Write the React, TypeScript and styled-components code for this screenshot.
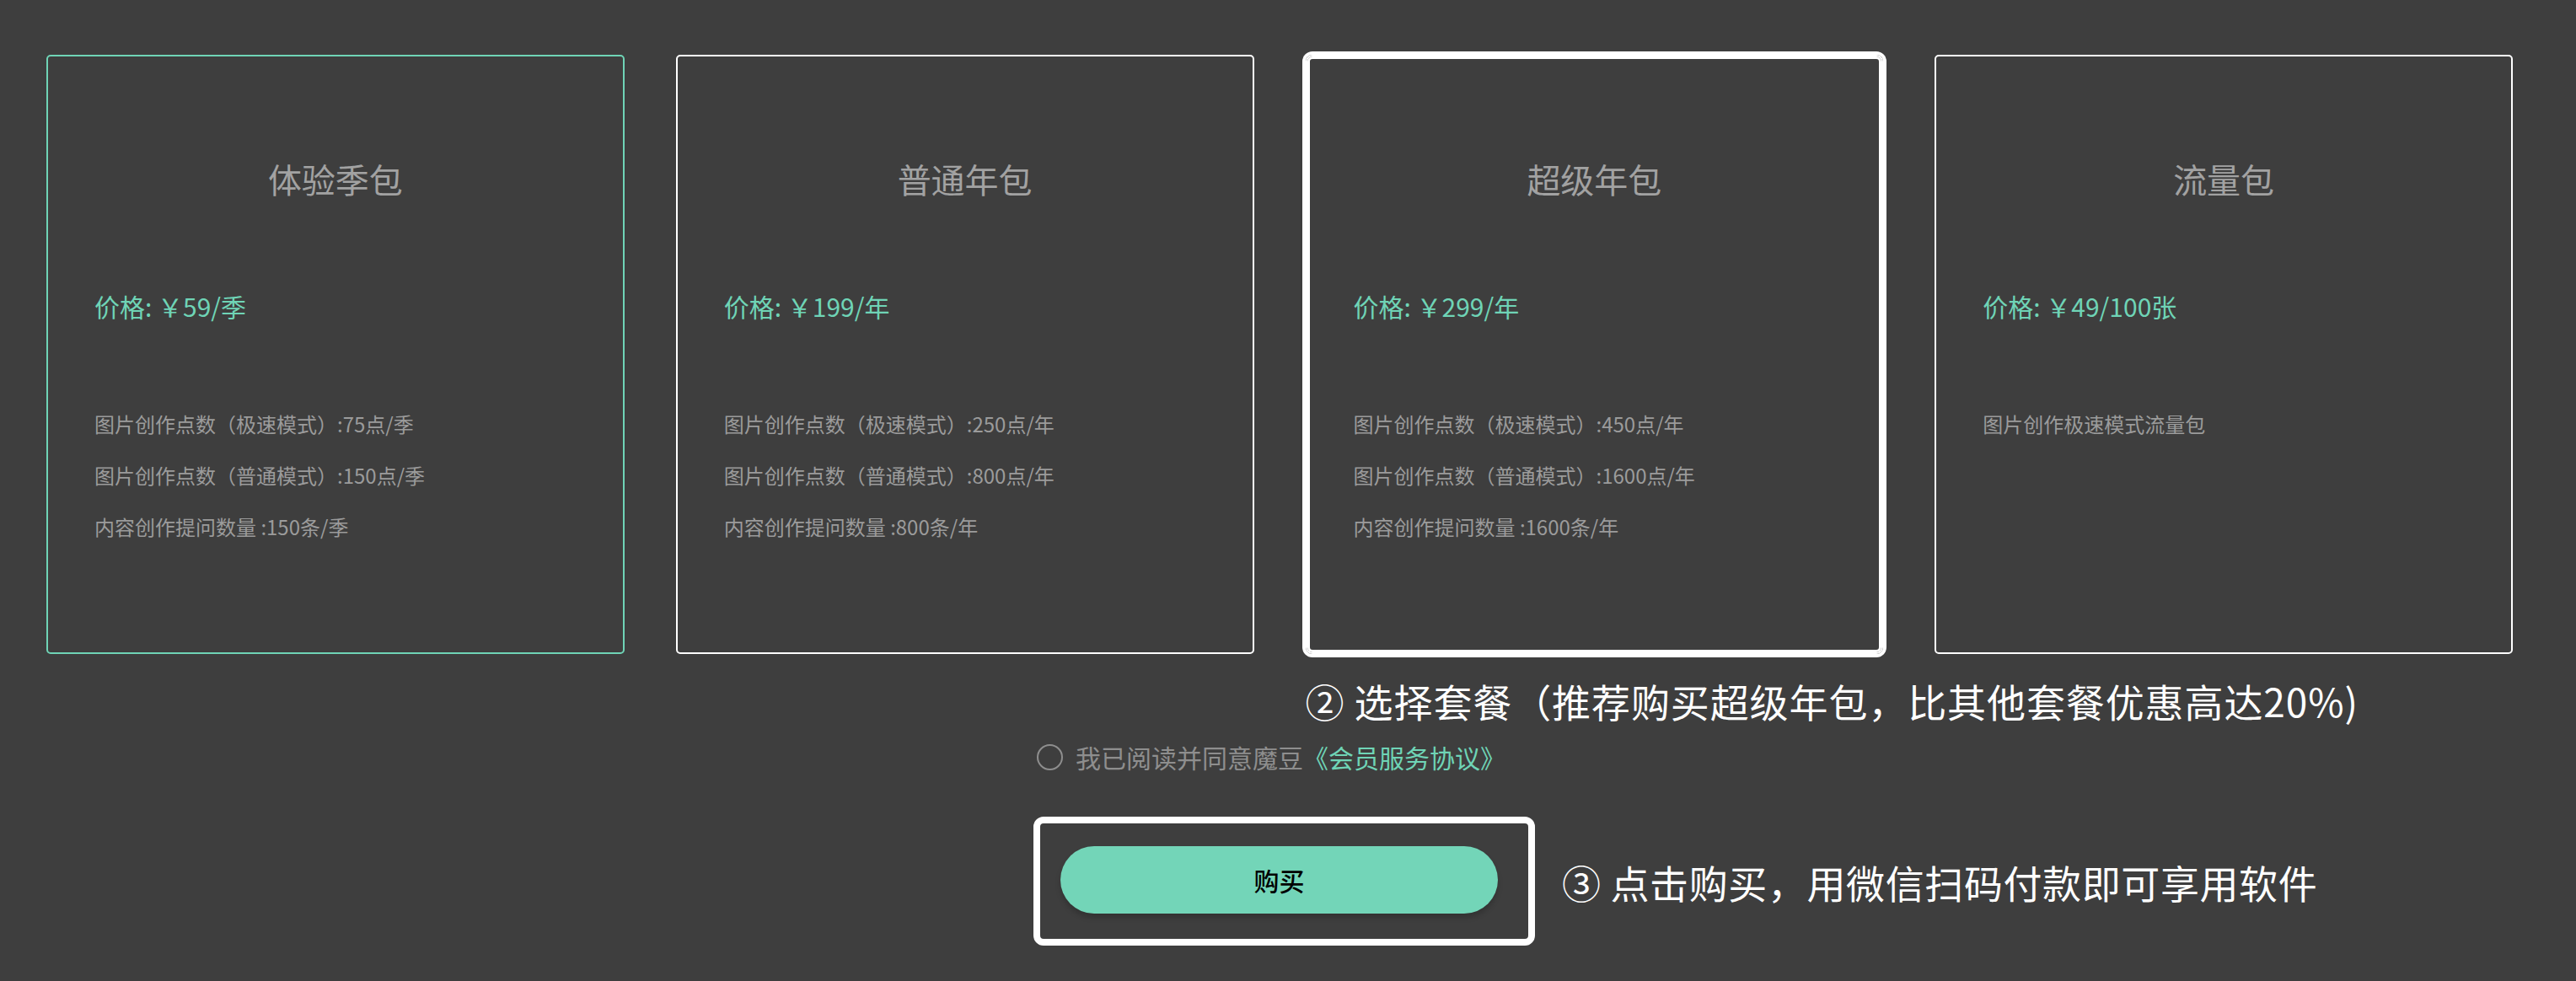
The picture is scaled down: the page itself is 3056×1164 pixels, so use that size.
import styled, { createGlobalStyle } from "styled-components";

const GlobalStyle = createGlobalStyle`
  html, body {
    margin: 0;
    padding: 0;
    background: #3e3e3e;
  }
  body {
    font-family: "Noto Sans CJK SC", "Noto Sans", sans-serif;
    min-height: 1164px;
  }
`;

const green = "#6fd4b6";

const Page = styled.div`
  width: 3056px;
  min-height: 1164px;
  padding-top: 65px;
  box-sizing: border-box;
`;

const CardGrid = styled.div`
  display: grid;
  grid-template-columns: repeat(4, 1fr);
  column-gap: 61px;
  padding: 0 75px 0 55px;
`;

const Card = styled.div<{ $active?: boolean; $marked?: boolean }>`
  height: 711px;
  box-sizing: border-box;
  border: 2px solid ${(p) => (p.$active ? green : "#ffffff")};
  border-radius: ${(p) => (p.$marked ? "8px" : "5px")};
  box-shadow: ${(p) =>
    p.$marked ? "0 0 0 4px #ffffff, inset 0 0 0 3px #ffffff" : "none"};
  padding: 121px 0 0 55px;
  display: flex;
  flex-direction: column;
`;

const Title = styled.div`
  font-size: 40px;
  line-height: 48px;
  color: #a2a2a2;
  text-align: center;
  padding-right: 55px;
`;

const Price = styled.div`
  margin-top: 107px;
  font-size: 30px;
  line-height: 40px;
  color: ${green};
`;

const Features = styled.ul`
  list-style: none;
  margin: 102px 0 0;
  padding: 0;
  display: flex;
  flex-direction: column;
  gap: 25px;
`;

const Feature = styled.li`
  font-size: 24px;
  line-height: 36px;
  color: #9b9b9b;
`;

const NoteRow = styled.div`
  display: grid;
  grid-template-columns: repeat(4, 1fr);
  column-gap: 61px;
  padding: 0 75px 0 55px;
  margin-top: 27px;
`;

const Note = styled.div<{ $col?: number }>`
  grid-column: ${(p) => p.$col ?? 3} / span 2;
  font-size: 46px;
  line-height: 56px;
  color: #ffffff;
  white-space: nowrap;
  letter-spacing: 0.9px;
`;

const AgreeRow = styled.label`
  display: flex;
  justify-content: center;
  align-items: center;
  gap: 15px;
  margin-top: 19px;
  padding-right: 40px;
  font-size: 30px;
  line-height: 40px;
  color: #8e8e8e;
  cursor: pointer;
`;

const Radio = styled.span`
  width: 31px;
  height: 31px;
  box-sizing: border-box;
  border: 2px solid #8e8e8e;
  border-radius: 50%;
`;

const Link = styled.span`
  color: ${green};
`;

const BuyRow = styled.div`
  display: grid;
  grid-template-columns: 1fr auto 1fr;
  align-items: center;
  margin-top: 51px;
  padding-right: 9px;
`;

const BuyFrame = styled.div`
  grid-column: 2;
  border: 8px solid #ffffff;
  border-radius: 12px;
  padding: 27px 36px 30px 24px;
`;

const BuyButton = styled.button`
  display: block;
  width: 519px;
  height: 80px;
  border: none;
  border-radius: 40px;
  background: #73d5b8;
  box-shadow: 0 5px 6px rgba(0, 0, 0, 0.18);
  font-family: inherit;
  font-size: 30px;
  font-weight: 500;
  color: #000000;
  cursor: pointer;
`;

const StepNote = styled.div`
  padding-left: 32px;
  font-size: 46px;
  line-height: 56px;
  color: #ffffff;
  white-space: nowrap;
  letter-spacing: 0.6px;
`;

type Plan = {
  name: string;
  price: string;
  features: string[];
};

const plans: Plan[] = [
  {
    name: "体验季包",
    price: "价格: ￥59/季",
    features: [
      "图片创作点数（极速模式）:75点/季",
      "图片创作点数（普通模式）:150点/季",
      "内容创作提问数量 :150条/季",
    ],
  },
  {
    name: "普通年包",
    price: "价格: ￥199/年",
    features: [
      "图片创作点数（极速模式）:250点/年",
      "图片创作点数（普通模式）:800点/年",
      "内容创作提问数量 :800条/年",
    ],
  },
  {
    name: "超级年包",
    price: "价格: ￥299/年",
    features: [
      "图片创作点数（极速模式）:450点/年",
      "图片创作点数（普通模式）:1600点/年",
      "内容创作提问数量 :1600条/年",
    ],
  },
  {
    name: "流量包",
    price: "价格: ￥49/100张",
    features: ["图片创作极速模式流量包"],
  },
];

export default function App() {
  return (
    <Page>
      <GlobalStyle />
      <CardGrid>
        {plans.map((plan, i) => (
          <Card key={plan.name} $active={i === 0} $marked={i === 2}>
            <Title>{plan.name}</Title>
            <Price>{plan.price}</Price>
            <Features>
              {plan.features.map((f) => (
                <Feature key={f}>{f}</Feature>
              ))}
            </Features>
          </Card>
        ))}
      </CardGrid>

      <NoteRow>
        <Note>② 选择套餐（推荐购买超级年包，比其他套餐优惠高达20%)</Note>
      </NoteRow>

      <AgreeRow>
        <Radio />
        <span>
          我已阅读并同意魔豆<Link>《会员服务协议》</Link>
        </span>
      </AgreeRow>

      <BuyRow>
        <BuyFrame>
          <BuyButton>购买</BuyButton>
        </BuyFrame>
        <StepNote>③ 点击购买，用微信扫码付款即可享用软件</StepNote>
      </BuyRow>
    </Page>
  );
}
